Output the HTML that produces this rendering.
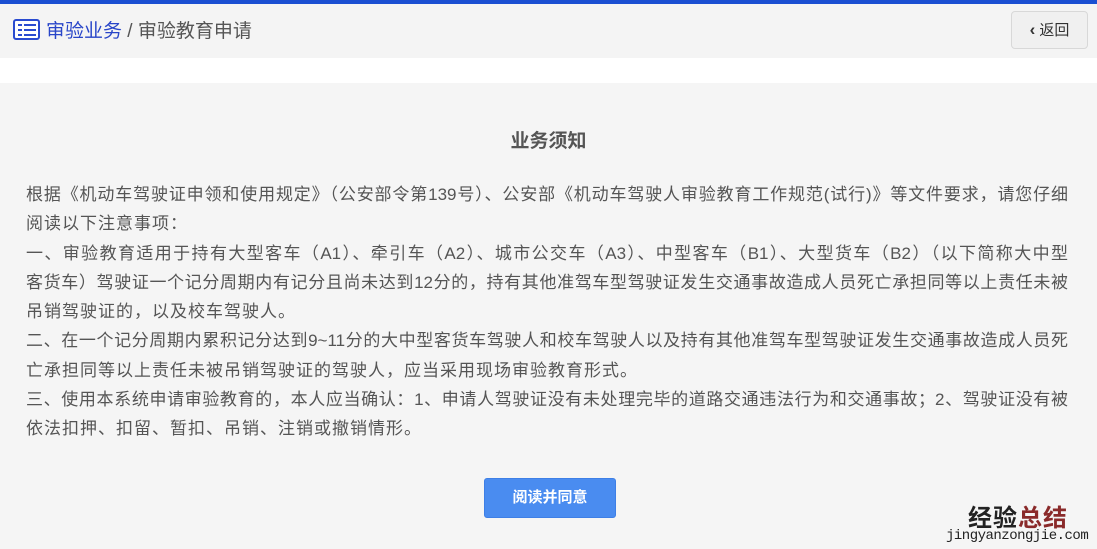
<!DOCTYPE html>
<html><head><meta charset="utf-8"><style>
*{margin:0;padding:0;box-sizing:border-box}
body{width:1097px;height:549px;overflow:hidden;background:#f5f5f5;font-family:"Liberation Sans","Noto Sans CJK SC",sans-serif;position:relative}
.top{position:absolute;left:0;top:0;width:1097px;height:4px;background:#1a4fd2}
.hdr{position:absolute;left:0;top:4px;width:1097px;height:54px;background:#f4f4f4}
.white{position:absolute;left:0;top:58px;width:1097px;height:25px;background:#fff}
.crumb{position:absolute;left:13px;top:19px;font-size:19px;color:#555;line-height:26px;white-space:nowrap}
.crumb .b{color:#2845c8}
.icon{display:inline-block;vertical-align:-3px;width:27px;height:21px;border:2px solid #2a4bd0;border-radius:3px;background:#fff;margin-right:6px;position:relative}
.icon i{position:absolute;left:3px;height:2px;width:4px;background:#2a4bd0}
.icon b{position:absolute;left:9px;height:2px;width:12px;background:#2a4bd0}
.btn{position:absolute;left:1011px;top:11px;width:77px;height:38px;border:1px solid #d8d8d8;border-radius:4px;background:#f0f0f0;font-size:15px;color:#333;line-height:36px;text-align:center}
h2{position:absolute;left:0;width:1097px;top:126px;text-align:center;font-size:19px;color:#555;font-weight:bold}
.txt{position:absolute;left:26px;top:180px;font-size:17px;color:#555;line-height:29.3px;width:1042px}
.txt div{white-space:nowrap}
.txt .f{text-align:justify;text-align-last:justify}
.ok{position:absolute;left:484px;top:478px;width:132px;height:40px;background:#4a8cf0;border:1px solid #3e7fe6;border-radius:3px;color:#fff;font-size:15px;font-weight:bold;text-align:center;line-height:38px}
.wm{position:absolute;left:968px;top:498px;font-size:24px;font-weight:bold;color:#222;letter-spacing:1px}
.wm span{color:#8a2a2a}
.wm2{position:absolute;left:946px;top:528px;font-size:14px;color:#222;font-family:"Liberation Mono",monospace;letter-spacing:-0.5px}
</style></head><body>
<div class="top"></div><div class="hdr"></div><div class="white"></div>
<div class="crumb"><span class="icon"><i style="top:3px"></i><b style="top:3px"></b><i style="top:8px"></i><b style="top:8px"></b><i style="top:13px"></i><b style="top:13px"></b></span><span class="b">审验业务</span> / 审验教育申请</div>
<div class="btn"><b style="font-size:17px">‹</b> 返回</div>
<h2>业务须知</h2>
<div class="txt">
<div class="f">根据《机动车驾驶证申领和使用规定》（公安部令第139号）、公安部《机动车驾驶人审验教育工作规范(试行)》等文件要求，请您仔细</div>
<div style="letter-spacing:1px">阅读以下注意事项：</div>
<div class="f">一、审验教育适用于持有大型客车（A1）、牵引车（A2）、城市公交车（A3）、中型客车（B1）、大型货车（B2）（以下简称大中型</div>
<div class="f">客货车）驾驶证一个记分周期内有记分且尚未达到12分的，持有其他准驾车型驾驶证发生交通事故造成人员死亡承担同等以上责任未被</div>
<div style="letter-spacing:1px">吊销驾驶证的，以及校车驾驶人。</div>
<div class="f">二、在一个记分周期内累积记分达到9~11分的大中型客货车驾驶人和校车驾驶人以及持有其他准驾车型驾驶证发生交通事故造成人员死</div>
<div style="letter-spacing:1px">亡承担同等以上责任未被吊销驾驶证的驾驶人，应当采用现场审验教育形式。</div>
<div class="f">三、使用本系统申请审验教育的，本人应当确认：1、申请人驾驶证没有未处理完毕的道路交通违法行为和交通事故；2、驾驶证没有被</div>
<div style="letter-spacing:1px">依法扣押、扣留、暂扣、吊销、注销或撤销情形。</div>
</div>
<div class="ok">阅读并同意</div>
<div class="wm">经验<span>总结</span></div>
<div class="wm2">jingyanzongjie.com</div>
</body></html>
